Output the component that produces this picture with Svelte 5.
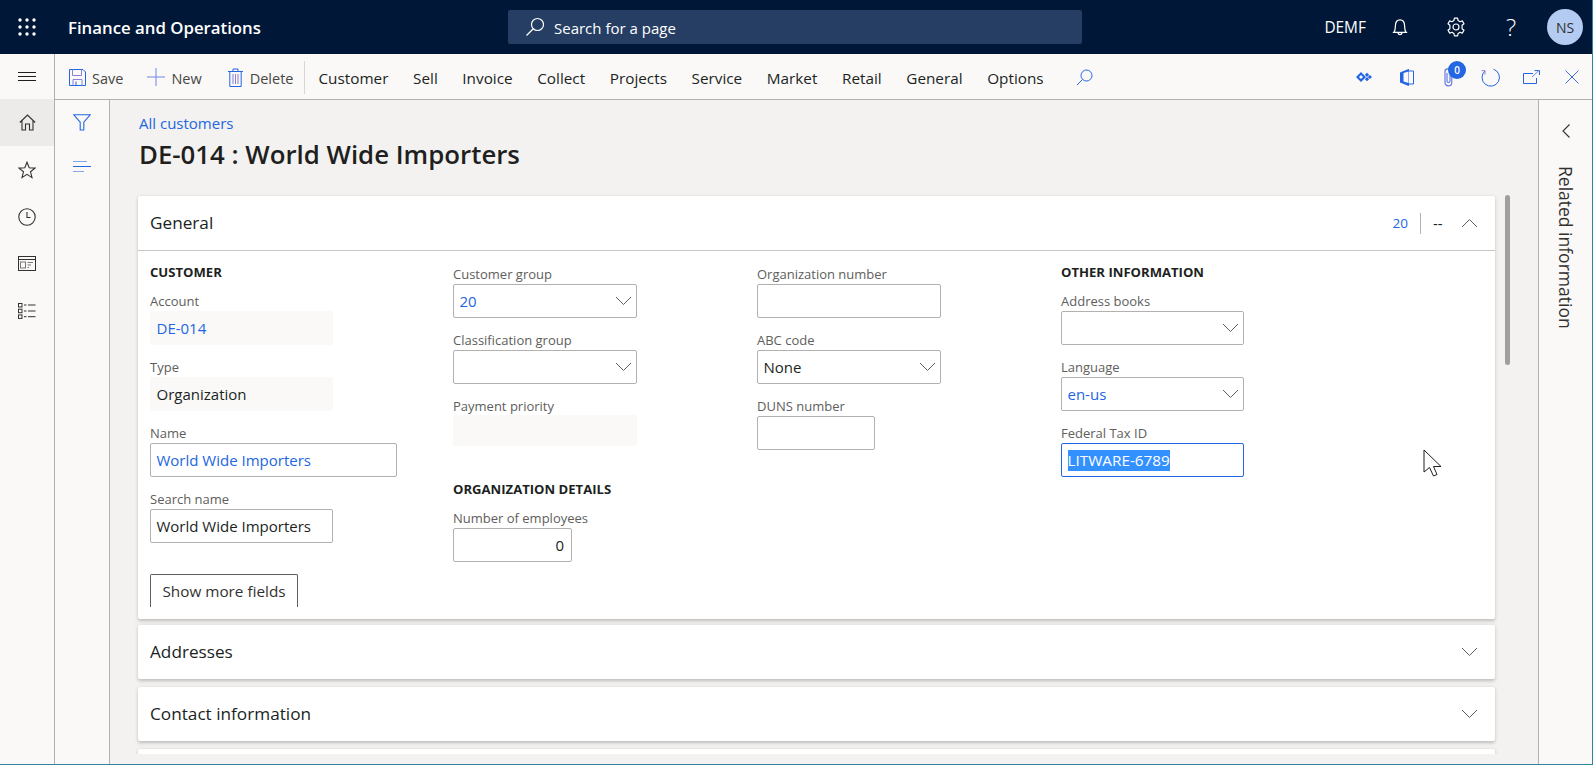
<script>
    const menu = ["Customer", "Sell", "Invoice", "Collect", "Projects", "Service", "Market", "Retail", "General", "Options"];
    const columns = [
        [
            { heading: "CUSTOMER" },
            { label: "Account", value: "DE-014", kind: "readonly", link: true, width: "w183" },
            { label: "Type", value: "Organization", kind: "readonly", width: "w183" },
            { label: "Name", value: "World Wide Importers", link: true, width: "w247" },
            { label: "Search name", value: "World Wide Importers", width: "w183" },
        ],
        [
            { label: "Customer group", value: "20", kind: "select", link: true, width: "w184" },
            { label: "Classification group", value: "", kind: "select", width: "w184" },
            { label: "Payment priority", value: "", kind: "readonly short", width: "w184" },
            { heading: "ORGANIZATION DETAILS", spaced: true },
            { label: "Number of employees", value: "0", number: true, width: "w119" },
        ],
        [
            { label: "Organization number", value: "", width: "w184" },
            { label: "ABC code", value: "None", kind: "select", width: "w184" },
            { label: "DUNS number", value: "", width: "w118" },
        ],
        [
            { heading: "OTHER INFORMATION" },
            { label: "Address books", value: "", kind: "select", width: "w183" },
            { label: "Language", value: "en-us", kind: "select", link: true, width: "w183" },
            { label: "Federal Tax ID", value: "LITWARE-6789", kind: "focused", width: "w183" },
        ],
    ];
</script>

{#snippet chevron(up = false)}
    <svg class="chevron" width="17" height="10" viewBox="0 0 17 10" fill="none" stroke="#605e5c" stroke-width="1">
        {#if up}
            <path d="M1 9 L8.5 1.5 L16 9" />
        {:else}
            <path d="M1 1 L8.5 8.5 L16 1" />
        {/if}
    </svg>
{/snippet}

<div class="window">
    <header class="topbar">
        <svg class="waffle" width="18" height="18" viewBox="0 0 18 18" fill="#fff">
            {#each [2, 9, 16] as y}
                {#each [2, 9, 16] as x}
                    <circle cx={x} cy={y} r="1.7" />
                {/each}
            {/each}
        </svg>
        <div class="product">Finance and Operations</div>
        <div class="search">
            <svg width="20" height="20" viewBox="0 0 20 20" fill="none" stroke="#fff" stroke-width="1.2">
                <circle cx="12.5" cy="7.5" r="6" />
                <path d="M8 12 L1.5 18.5" />
            </svg>
            <span>Search for a page</span>
        </div>
        <div class="top-right">
            <span class="company">DEMF</span>
            <svg class="t-icon" width="16" height="19" viewBox="0 0 18 20" fill="none" stroke="#fff" stroke-width="1.4">
                <path d="M2 15.5 C4 13.5 3.6 11 3.8 8 C4 4 6 1.5 9 1.5 C12 1.5 14 4 14.2 8 C14.4 11 14 13.5 16 15.5 Z" />
                <path d="M6.8 16 C7 18.6 11 18.6 11.2 16" />
            </svg>
            <svg class="t-icon gear" width="20" height="20" viewBox="0 0 20 20" fill="none" stroke="#fff" stroke-width="1.2">
                <circle cx="10" cy="10" r="3" />
                <path d="M8.4 1.2 H11.6 L12.1 3.6 L14 4.7 L16.3 3.9 L18 6.7 L16.1 8.3 V11.7 L18 13.3 L16.3 16.1 L14 15.3 L12.1 16.4 L11.6 18.8 H8.4 L7.9 16.4 L6 15.3 L3.7 16.1 L2 13.3 L3.9 11.7 V8.3 L2 6.7 L3.7 3.9 L6 4.7 L7.9 3.6 Z" stroke-linejoin="round" />
            </svg>
            <span class="help">?</span>
            <div class="avatar">NS</div>
        </div>
    </header>

    <div class="main">
        <nav class="rail">
            <div class="rail-btn">
                <svg width="18" height="10" viewBox="0 0 18 10" stroke="#201f1e" stroke-width="1"><path d="M0 .5 H18 M0 4.5 H18 M0 8.5 H18" /></svg>
            </div>
            <div class="rail-btn active">
                <svg width="17" height="17" viewBox="0 0 17 17" fill="none" stroke="#323130" stroke-width="1.1">
                    <path d="M.8 8.5 L8.5 1 L16.2 8.5 M3 6.8 V16 H6.5 V10 H10.5 V16 H14 V6.8" />
                </svg>
            </div>
            <div class="rail-btn">
                <svg width="18" height="18" viewBox="0 0 18 18" fill="none" stroke="#323130" stroke-width="1.1">
                    <path d="M9 1.2 L11.2 6.8 L17 7.1 L12.5 10.8 L14 16.6 L9 13.4 L4 16.6 L5.5 10.8 L1 7.1 L6.8 6.8 Z" />
                </svg>
            </div>
            <div class="rail-btn">
                <svg width="18" height="18" viewBox="0 0 18 18" fill="none" stroke="#323130" stroke-width="1.1">
                    <circle cx="9" cy="9" r="8.2" />
                    <path d="M9 4 V9.5 H12.5" />
                </svg>
            </div>
            <div class="rail-btn">
                <svg width="18" height="15" viewBox="0 0 18 15" fill="none" stroke="#323130" stroke-width="1">
                    <rect x=".5" y=".5" width="17" height="14" />
                    <path d="M.5 3.5 H17.5" />
                    <rect x="2.5" y="6" width="5" height="6" stroke="#797775" />
                    <path d="M9.5 6.5 H15 M9.5 9 H13 M9.5 11.5 H11" stroke="#797775" />
                </svg>
            </div>
            <div class="rail-btn">
                <svg width="18" height="16" viewBox="0 0 18 16" fill="none" stroke="#323130" stroke-width="1">
                    <rect x=".5" y=".5" width="3.5" height="3.5" />
                    <rect x=".5" y="6.2" width="3.5" height="3.5" />
                    <rect x=".5" y="11.9" width="3.5" height="3.5" />
                    <path d="M6 2 H8.5 M10 2 H17.5 M6 8 H8.5 M10 8 H17.5 M6 13.7 H8.5 M10 13.7 H17.5" />
                </svg>
            </div>
        </nav>

        <div class="workspace">
            <div class="cmdbar">
                <button class="cmd">
                    <svg width="17" height="17" viewBox="0 0 17 17" fill="none" stroke="#2266e3" stroke-width="1">
                        <path d="M.5 .5 H14 L16.5 3 V16.5 H.5 Z" />
                        <path d="M3.5 .5 V6.5 H12.5 V.5 M4 16.5 V10.5 H13 V16.5" stroke="#8c7fd6" />
                        <path d="M7 12.5 V16" />
                    </svg>
                    <span>Save</span>
                </button>
                <button class="cmd new">
                    <svg width="18" height="18" viewBox="0 0 18 18" stroke="#2266e3" stroke-width="1"><path d="M9 0 V18" stroke="#6f87e8" /><path d="M0 9 H18" stroke="#6f87e8" /></svg>
                    <span>New</span>
                </button>
                <button class="cmd del">
                    <svg width="15" height="19" viewBox="0 0 15 19" fill="none" stroke="#2266e3" stroke-width="1">
                        <path d="M0 3.5 H15 M5 3.5 V1 H10 V3.5 M1.8 3.5 V18.5 H13.2 V3.5" />
                        <path d="M5 6 V16 M7.5 6 V16 M10 6 V16" stroke="#8c7fd6" />
                    </svg>
                    <span>Delete</span>
                </button>
                <div class="cmd-sep"></div>
                <div class="menu">
                    {#each menu as item}
                        <span>{item}</span>
                    {/each}
                </div>
                <svg class="menu-search" width="17" height="17" viewBox="0 0 17 17" fill="none" stroke="#2266e3" stroke-width="1">
                    <circle cx="10.5" cy="6.5" r="5.5" />
                    <path d="M6.5 10.5 L1 16" />
                </svg>
                <div class="cmd-right">
                    <svg width="16" height="10" viewBox="0 0 16 10" fill="#2266e3">
                        <path d="M5 0 L10 5 L5 10 L0 5 Z M5 3 L3 5 L5 7 L7 5 Z" fill-rule="evenodd" />
                        <rect x="9.5" y="1.3" width="3" height="3" transform="rotate(45 11 2.8)" />
                        <rect x="9.5" y="5.7" width="3" height="3" transform="rotate(45 11 7.2)" />
                        <rect x="12.4" y="3.5" width="3" height="3" transform="rotate(45 13.9 5)" />
                    </svg>
                    <svg class="office" width="14" height="17" viewBox="0 0 14 17">
                        <path d="M0 3.5 L8.5 0 L9 .2 V16.8 L8.5 17 L0 13.5 Z M8.5 2.5 L3.5 4 V12.6 L8.5 14 Z" fill="#2266e3" fill-rule="evenodd" />
                        <path d="M9 2 H13.5 V15 H9" fill="none" stroke="#2266e3" />
                    </svg>
                    <div class="attach">
                        <svg width="9" height="19" viewBox="0 0 9 19" fill="none" stroke="#5a72e0" stroke-width="1.1">
                            <path d="M7.8 6 V14.5 C7.8 19 1 19 1 14.5 V3.5 C1 0 6 0 6 3.5 V13 C6 15 3 15 3 13 V5" />
                        </svg>
                        <span class="badge">0</span>
                    </div>
                    <svg class="refresh" width="19" height="19" viewBox="0 0 19 19" fill="none" stroke="#2266e3" stroke-width="1">
                        <path d="M12.5 1.2 A8.7 8.7 0 1 1 4 2.9" />
                        <path d="M4 6.5 V2.7 H.5" stroke="#8c7fd6" />
                    </svg>
                    <svg class="popout" width="17" height="14" viewBox="0 0 17 14" fill="none" stroke="#2266e3" stroke-width="1">
                        <path d="M10 3.5 H.5 V13.5 H13.5 V8" />
                        <path d="M9 7 L15.5 1" stroke="#6f87e8" />
                        <path d="M11.5 .6 H16.5 V5" />
                    </svg>
                    <svg class="close" width="14" height="14" viewBox="0 0 14 14" stroke="#3c6fe0" stroke-width="1"><path d="M.5 .5 L13.5 13.5 M13.5 .5 L.5 13.5" /></svg>
                </div>
            </div>

            <div class="body">
                <aside class="tools">
                    <svg width="18" height="17" viewBox="0 0 18 17" fill="none" stroke="#2266e3" stroke-width="1.1">
                        <path d="M.8 .8 H17.2 L10.8 8.2 V16 H7.2 V8.2 Z" />
                    </svg>
                    <svg width="18" height="11" viewBox="0 0 18 11" stroke="#2266e3" stroke-width="1">
                        <path d="M0 .5 H14" stroke="#7fa6ee" />
                        <path d="M0 5.5 H18" />
                        <path d="M0 10.5 H11" stroke="#7fa6ee" />
                    </svg>
                </aside>

                <div class="page">
                    <div class="page-inner">
                        <div class="page-flow">
                            <a class="crumb" href="/">All customers</a>
                            <h1>DE-014 : World Wide Importers</h1>

                            <section class="card">
                                <div class="card-head open">
                                    <h2>General</h2>
                                    <div class="summary">
                                        <span class="sum-link">20</span>
                                        <span class="sum-sep"></span>
                                        <span class="sum-dash">--</span>
                                        {@render chevron(true)}
                                    </div>
                                </div>
                                <div class="form">
                                    {#each columns as column, i}
                                        <div class="col" class:offset={i === 1 || i === 2}>
                                            {#each column as f}
                                                {#if f.heading}
                                                    <h3 class:spaced={f.spaced}>{f.heading}</h3>
                                                {:else}
                                                    <div class="field">
                                                        <div class="label">{f.label}</div>
                                                        <div class="box {f.width} {f.kind ?? 'input'}" class:link={f.link} class:number={f.number}>
                                                            {#if f.kind === "focused"}
                                                                <span class="selected">{f.value}</span>
                                                            {:else}
                                                                <span>{f.value}</span>
                                                            {/if}
                                                            {#if f.kind === "select"}
                                                                {@render chevron()}
                                                            {/if}
                                                        </div>
                                                    </div>
                                                {/if}
                                            {/each}
                                            {#if i === 0}
                                                <div class="more">Show more fields</div>
                                            {/if}
                                        </div>
                                    {/each}
                                </div>
                            </section>

                            <section class="card">
                                <div class="card-head"><h2>Addresses</h2>{@render chevron()}</div>
                            </section>
                            <section class="card">
                                <div class="card-head"><h2>Contact information</h2>{@render chevron()}</div>
                            </section>
                            <section class="card">
                                <div class="card-head"></div>
                            </section>
                        </div>
                        <div class="scrollbar"></div>
                    </div>
                    <svg class="pointer" width="20" height="29" viewBox="0 0 20 29" fill="#fff" stroke="#201f1e" stroke-width="1">
                        <path d="M1 1 V23 L6.5 18.5 L10.5 27 L14 25.5 L10.5 17.5 L18 17.5 Z" />
                    </svg>
                </div>

                <aside class="related">
                    <svg width="8" height="14" viewBox="0 0 8 14" fill="none" stroke="#323130" stroke-width="1.1"><path d="M7.5 .5 L1 7 L7.5 13.5" /></svg>
                    <div class="related-text">Related information</div>
                </aside>
            </div>
        </div>
    </div>
</div>

<style>
    :global(body) {
        margin: 0;
        background: #f3f2f1;
    }

    * {
        box-sizing: border-box;
    }

    .window {
        width: 1593px;
        height: 765px;
        display: flex;
        flex-direction: column;
        overflow: hidden;
        font-family: "Open Sans", "Noto Sans", sans-serif;
        font-size: 14px;
        color: #201f1e;
        border-right: 1px solid #2f8299;
        border-bottom: 1px solid #2f8299;
    }

    .topbar {
        height: 54px;
        flex: none;
        display: flex;
        align-items: center;
        background: #001738;
        color: #fff;
    }

    .waffle {
        margin-left: 18px;
    }

    .product {
        margin-left: 32px;
        width: 440px;
        font-size: 16.8px;
        font-weight: 600;
    }

    .search {
        width: 574px;
        height: 34px;
        display: flex;
        align-items: center;
        gap: 9px;
        padding-left: 17px;
        background: #263e63;
        border-radius: 2px;
        font-size: 15px;
    }

    .search span {
        padding-top: 2px;
    }

    .top-right {
        margin-left: auto;
        display: flex;
        align-items: center;
        padding-right: 9px;
    }

    .company {
        font-size: 15.4px;
        margin-right: 26px;
    }

    .t-icon {
        display: block;
    }

    .gear {
        margin-left: 38px;
    }

    .help {
        margin-left: 40px;
        margin-right: 31px;
        font-size: 24px;
        font-weight: 300;
        line-height: 1;
    }

    .avatar {
        width: 36px;
        height: 36px;
        border-radius: 50%;
        background: #b4ccf2;
        color: #323130;
        display: flex;
        align-items: center;
        justify-content: center;
        font-size: 14px;
    }

    .main {
        flex: 1;
        min-height: 0;
        display: flex;
    }

    .rail {
        width: 55px;
        flex: none;
        background: #faf9f8;
        border-right: 1px solid #b3b0ad;
    }

    .rail-btn {
        height: 47px;
        display: flex;
        align-items: center;
        justify-content: center;
    }

    .rail-btn:first-child {
        height: 45px;
    }

    .rail-btn.active {
        background: #edebe9;
    }

    .workspace {
        flex: 1;
        min-width: 0;
        display: flex;
        flex-direction: column;
    }

    .cmdbar {
        height: 46px;
        flex: none;
        display: flex;
        align-items: center;
        background: #faf9f8;
        border-bottom: 1px solid #b3b0ad;
        padding: 1px 0 0 14px;
    }

    .cmd {
        display: flex;
        align-items: center;
        gap: 6px;
        border: 0;
        padding: 0;
        background: none;
        font: inherit;
        font-size: 14.5px;
        color: #484644;
    }

    .cmd span {
        padding-top: 2px;
    }

    .new {
        margin-left: 24px;
    }

    .del {
        margin-left: 26px;
        gap: 7px;
    }

    .cmd-sep {
        width: 1px;
        height: 33px;
        margin-left: 11px;
        background: #d8d6d4;
    }

    .menu {
        display: flex;
        gap: 24.6px;
        margin-left: 13px;
        padding-top: 2px;
        font-size: 15.3px;
        font-weight: 500;
    }

    .menu-search {
        margin-left: 32px;
    }

    .cmd-right {
        margin-left: auto;
        display: flex;
        align-items: center;
        padding-right: 13px;
    }

    .office {
        margin-left: 28px;
    }

    .attach {
        position: relative;
        margin-left: 30px;
        display: flex;
    }

    .badge {
        position: absolute;
        left: 4px;
        top: -7px;
        width: 18px;
        height: 18px;
        border-radius: 50%;
        background: #2266e3;
        color: #fff;
        font-size: 10px;
        font-weight: 600;
        display: flex;
        align-items: center;
        justify-content: center;
    }

    .refresh {
        margin-left: 28px;
    }

    .popout {
        margin-left: 23px;
    }

    .close {
        margin-left: 25px;
    }

    .body {
        flex: 1;
        min-height: 0;
        display: flex;
    }

    .tools {
        width: 55px;
        flex: none;
        background: #faf9f8;
        border-right: 1px solid #b3b0ad;
        display: flex;
        flex-direction: column;
        align-items: center;
        padding-top: 14px;
        gap: 30px;
    }

    .page {
        position: relative;
        flex: 1;
        min-width: 0;
        background: #f3f2f1;
        padding-bottom: 10px;
    }

    .page-inner {
        height: 100%;
        display: flex;
        overflow: hidden;
    }

    .page-flow {
        width: 1357px;
        margin-left: 28px;
        padding-top: 13px;
        flex: none;
    }

    .crumb {
        display: block;
        font-size: 15px;
        line-height: 20px;
        color: #2266e3;
        text-decoration: none;
        margin-left: 1px;
    }

    h1 {
        margin: 4px 0 24px 1px;
        font-size: 25.8px;
        line-height: 35px;
        font-weight: 600;
        color: #201f1e;
    }

    .card {
        background: #fff;
        border-radius: 2px;
        box-shadow: 0 1.6px 3.6px rgba(0, 0, 0, 0.22);
        margin-bottom: 8px;
    }

    .card:nth-of-type(1) {
        margin-bottom: 6px;
    }

    .card-head {
        height: 54px;
        display: flex;
        align-items: center;
        justify-content: space-between;
        padding: 0 17px 0 12px;
    }

    .card-head.open {
        height: 55px;
        border-bottom: 1px solid #c8c6c4;
    }

    h2 {
        margin: 0;
        padding-bottom: 2px;
        font-size: 17.2px;
        font-weight: 500;
        color: #201f1e;
    }

    .summary {
        display: flex;
        align-items: center;
    }

    .sum-link {
        color: #2266e3;
        font-size: 13.5px;
    }

    .sum-sep {
        width: 1px;
        height: 21px;
        background: #b3b0ad;
        margin: 0 12px;
    }

    .sum-dash {
        width: 12px;
        margin-right: 16px;
        font-size: 15px;
    }

    .chevron {
        display: block;
        flex: none;
    }

    .form {
        display: grid;
        grid-template-columns: 303px 304px 304px 304px;
        padding: 11px 12px 12px;
    }

    .col.offset {
        padding-top: 2px;
    }

    h3 {
        margin: 0 0 9px;
        padding-top: 1px;
        font-size: 13.1px;
        line-height: 19px;
        font-weight: 700;
        color: #201f1e;
    }

    h3.spaced {
        margin-top: 33px;
    }

    .field {
        margin-bottom: 12px;
    }

    .label {
        height: 20px;
        line-height: 20px;
        font-size: 13px;
        color: #605e5c;
    }

    .box {
        height: 34px;
        display: flex;
        align-items: center;
        justify-content: space-between;
        padding: 0 5.5px;
        border: 1px solid #b3b0ad;
        border-radius: 2px;
        background: #fff;
        font-size: 15px;
    }

    .box.readonly {
        border-color: #faf9f8;
        background: #faf9f8;
    }

    .box.select {
        padding-right: 4px;
    }

    .box.short {
        height: 31px;
        margin-top: -1px;
    }

    .box.link {
        color: #2266e3;
    }

    .box.number {
        justify-content: flex-end;
        padding-right: 7px;
    }

    .box.focused {
        border-color: #2266e3;
        color: #fff;
    }

    .selected {
        background: #3390ff;
        line-height: 21px;
        font-size: 15.3px;
    }

    .w119 {
        width: 119px;
    }

    .w118 {
        width: 118px;
    }

    .w183 {
        width: 183px;
    }

    .w184 {
        width: 184px;
    }

    .w247 {
        width: 247px;
    }

    .more {
        width: 148px;
        height: 33px;
        margin-top: 31px;
        display: flex;
        align-items: center;
        justify-content: center;
        font-size: 15.3px;
        color: #323130;
        border: 1px solid #605e5c;
        border-bottom: 0;
        border-radius: 2px 2px 0 0;
    }

    .scrollbar {
        width: 5px;
        height: 170px;
        margin-top: 95px;
        margin-left: 10px;
        border-radius: 3px;
        background: #a19f9d;
        flex: none;
    }

    .pointer {
        position: absolute;
        left: 1313px;
        top: 349px;
    }

    .related {
        width: 54px;
        flex: none;
        background: #faf9f8;
        border-left: 1px solid #b3b0ad;
        display: flex;
        flex-direction: column;
        align-items: center;
        padding-top: 24px;
        gap: 28px;
    }

    .related-text {
        writing-mode: vertical-rl;
        font-size: 17.5px;
        color: #323130;
    }
</style>
